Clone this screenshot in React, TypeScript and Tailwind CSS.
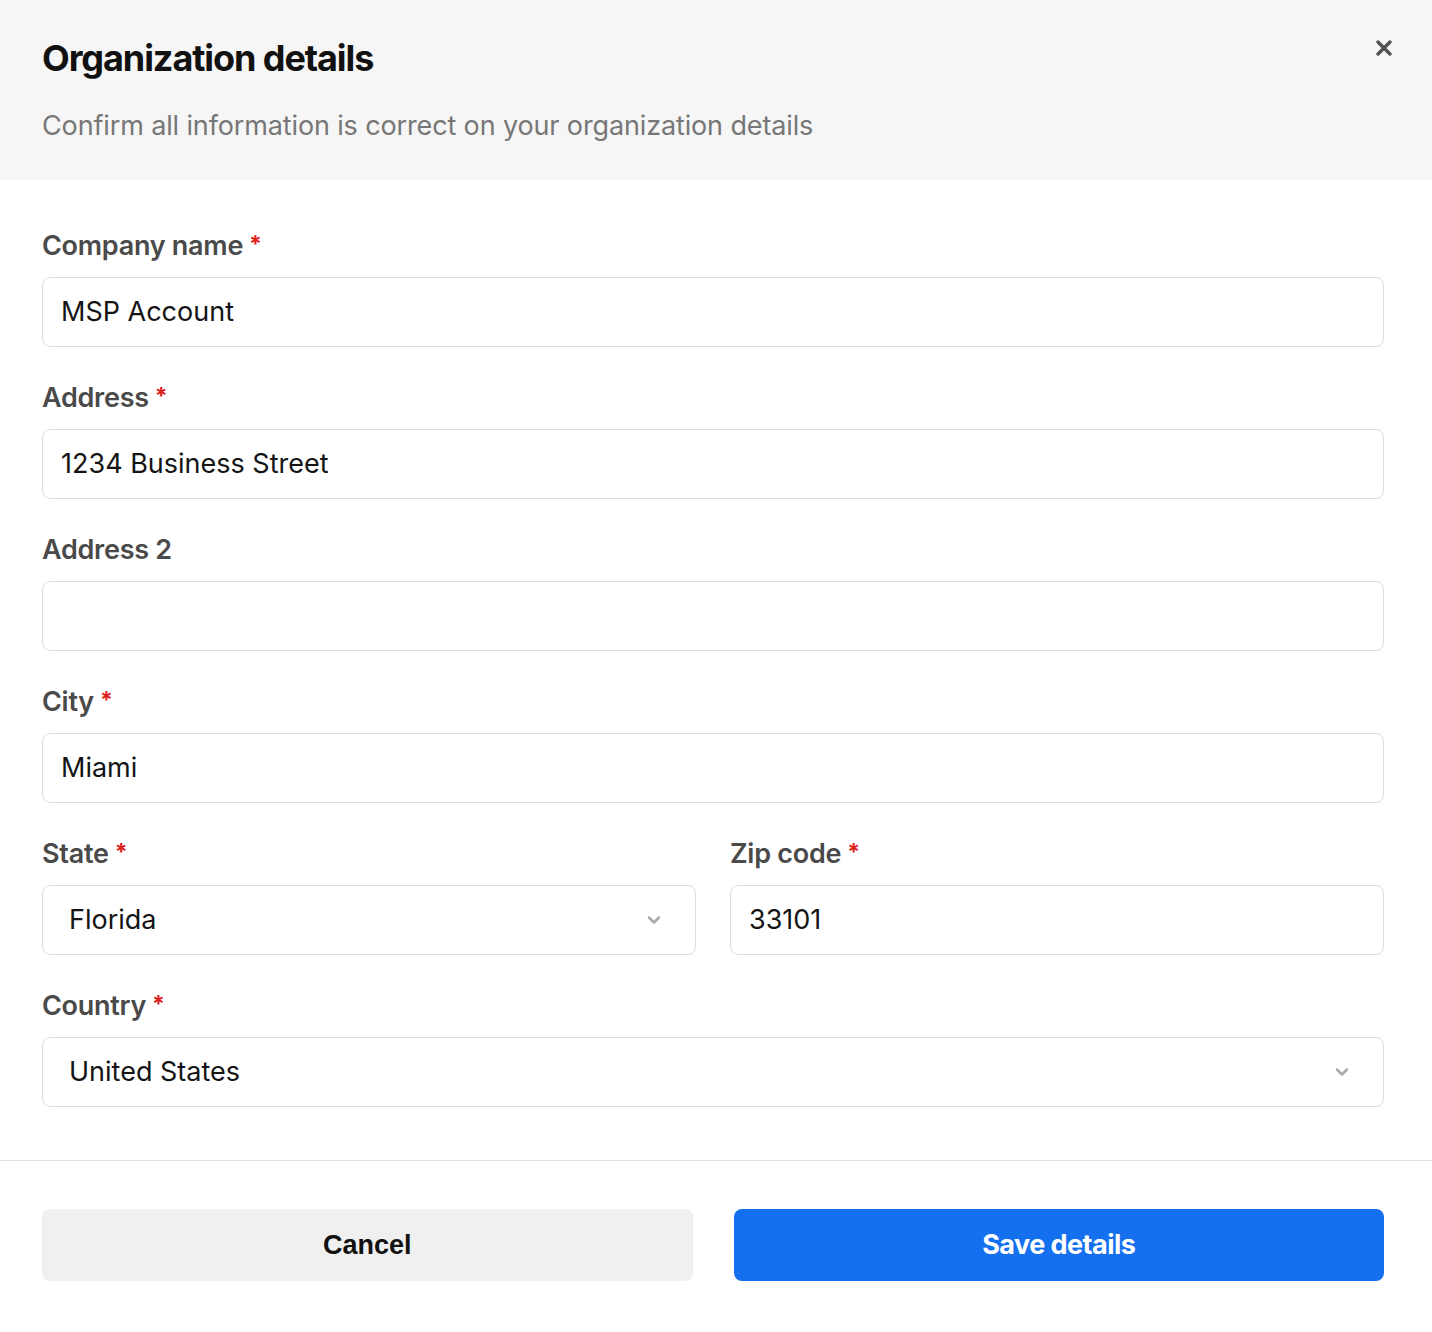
import { X, ChevronDown } from "lucide-react";

const font = { fontFamily: "Inter, 'Noto Sans', sans-serif" };

function Label({ text, required }: { text: string; required?: boolean }) {
  return (
    <div className="flex h-[32px] items-center gap-[6px] text-[27px] font-semibold leading-[32px] tracking-[-0.01em] text-[#4a4a4a]">
      <span>{text}</span>
      {required && <span className="relative -top-[2px] text-[23px] font-bold text-[#e0201b]">*</span>}
    </div>
  );
}

function TextInput({ value }: { value: string }) {
  return (
    <div className="flex h-[70px] items-center rounded-[8px] border border-[#dcdcdc] bg-white px-[18px] text-[27px] text-[#141414]">
      {value}
    </div>
  );
}

function SelectInput({ value }: { value: string }) {
  return (
    <div className="flex h-[70px] items-center justify-between rounded-[8px] border border-[#dcdcdc] bg-white pl-[26px] pr-[31px] text-[27px] text-[#141414]">
      <span>{value}</span>
      <ChevronDown className="h-[20px] w-[20px] text-[#a8a8a8]" strokeWidth={3} />
    </div>
  );
}

function Field({ label, required, children }: { label: string; required?: boolean; children: React.ReactNode }) {
  return (
    <div className="flex flex-col gap-[15px]">
      <Label text={label} required={required} />
      {children}
    </div>
  );
}

export default function App() {
  return (
    <div className="min-h-[1332px] w-full bg-white" style={font}>
      <header className="flex h-[180px] items-start justify-between bg-[#f6f6f6] pl-[42px] pr-[36px] pt-[36px]">
        <div>
          <h1 className="text-[36px] font-bold leading-[44px] tracking-[-0.03em] text-[#111]">Organization details</h1>
          <p className="mt-[29px] text-[27px] leading-[34px] tracking-[-0.005em] text-[#777]">
            Confirm all information is correct on your organization details
          </p>
        </div>
        <button className="text-[#555]">
          <X className="h-[24px] w-[24px]" strokeWidth={3.5} />
        </button>
      </header>

      <div className="flex flex-col gap-[35px] pb-[53px] pl-[42px] pr-[48px] pt-[50px]">
        <Field label="Company name" required>
          <TextInput value="MSP Account" />
        </Field>
        <Field label="Address" required>
          <TextInput value="1234 Business Street" />
        </Field>
        <Field label="Address 2">
          <TextInput value="" />
        </Field>
        <Field label="City" required>
          <TextInput value="Miami" />
        </Field>
        <div className="grid grid-cols-2 gap-[34px]">
          <Field label="State" required>
            <SelectInput value="Florida" />
          </Field>
          <Field label="Zip code" required>
            <TextInput value="33101" />
          </Field>
        </div>
        <Field label="Country" required>
          <SelectInput value="United States" />
        </Field>
      </div>

      <div className="border-t border-[#e2e2e2]" />

      <footer className="grid grid-cols-2 gap-[41px] pb-[50px] pl-[42px] pr-[48px] pt-[48px]">
        <button
          className="h-[72px] rounded-[8px] bg-[#f0f0f0] text-[27px] font-bold text-[#111]"
          style={{ fontFamily: "'Liberation Sans', Arial, sans-serif" }}
        >
          Cancel
        </button>
        <button className="h-[72px] rounded-[8px] bg-[#1570ef] text-[27px] font-bold tracking-[-0.02em] text-white">
          Save details
        </button>
      </footer>
    </div>
  );
}
